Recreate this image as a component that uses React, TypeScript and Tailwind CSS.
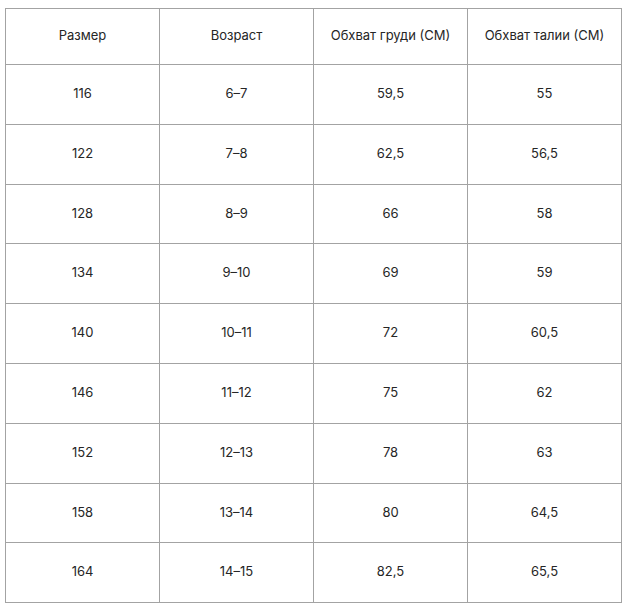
import React from "react";

const rows: string[][] = [
  ["116", "6-7", "59,5", "55"],
  ["122", "7-8", "62,5", "56,5"],
  ["128", "8-9", "66", "58"],
  ["134", "9-10", "69", "59"],
  ["140", "10-11", "72", "60,5"],
  ["146", "11-12", "75", "62"],
  ["152", "12-13", "78", "63"],
  ["158", "13-14", "80", "64,5"],
  ["164", "14-15", "82,5", "65,5"],
];
const heights = ["h-[60px]", "h-[60px]", "h-[59px]", "h-[60px]", "h-[60px]", "h-[60px]", "h-[60px]", "h-[59px]", "h-[60px]"];

export default function App() {
  const header = ["Размер", "Возраст", "Обхват груди (СМ)", "Обхват талии (СМ)"];
  return (
    <div className="w-[628px] h-[609px] bg-white pt-[8px] pl-[5px]" style={{ fontFamily: "Inter, 'Noto Sans', sans-serif" }}>
      <div className="w-[617px] border-l border-t border-[#a3a3a3] text-[13px] text-[#262626]">
        <div className="grid grid-cols-[154px_154px_154px_154px] h-[56px]">
          {header.map((h) => (
            <div key={h} className="border-r border-b border-[#a3a3a3] flex items-center justify-center pb-[1px]">{h}</div>
          ))}
        </div>
        {rows.map((r, i) => (
          <div key={i} className={`grid grid-cols-[154px_154px_154px_154px] ${heights[i]}`}>
            {r.map((c, j) => (
              <div key={j} className="border-r border-b border-[#a3a3a3] flex items-center justify-center pb-[1px]">{c.replace("-", "–")}</div>
            ))}
          </div>
        ))}
      </div>
    </div>
  );
}
